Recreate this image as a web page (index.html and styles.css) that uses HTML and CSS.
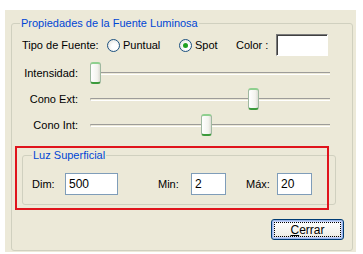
FILE: index.html
```html
<!DOCTYPE html>
<html lang="es">
<head>
  <meta charset="UTF-8">
  <title>Fuente Luminosa</title>
  <link rel="stylesheet" href="styles.css">
</head>
<body>
  <div class="dialog">
    <fieldset class="group main">
      <legend>Propiedades de la Fuente Luminosa</legend>

      <div class="type-row">
        <span class="type-label">Tipo de Fuente:</span>
        <label class="radio"><span class="dot"></span>Puntual</label>
        <label class="radio checked"><span class="dot"></span>Spot</label>
        <span class="color-label">Color :</span>
        <span class="color-box"></span>
      </div>

      <div class="slider-row">
        <span class="slider-label">Intensidad:</span>
        <div class="slider">
          <div class="track"></div>
          <div class="thumb-area"><span class="thumb" style="left: 0%"></span></div>
        </div>
      </div>

      <div class="slider-row">
        <span class="slider-label">Cono Ext:</span>
        <div class="slider">
          <div class="track"></div>
          <div class="thumb-area"><span class="thumb" style="left: 69%"></span></div>
        </div>
      </div>

      <div class="slider-row">
        <span class="slider-label">Cono Int:</span>
        <div class="slider">
          <div class="track"></div>
          <div class="thumb-area"><span class="thumb" style="left: 48.5%"></span></div>
        </div>
      </div>

      <!-- Luz superficial, marcada en rojo -->
      <div class="surface">
        <fieldset class="group inner">
          <legend>Luz Superficial</legend>
          <div class="fields">
            <span class="field-label">Dim:</span>
            <input class="text dim" type="text" value="500">
            <span class="field-label min">Min:</span>
            <input class="text small" type="text" value="2">
            <span class="field-label max">Máx:</span>
            <input class="text small" type="text" value="20">
          </div>
        </fieldset>
        <div class="highlight"></div>
      </div>

      <div class="actions">
        <button class="btn"><u>C</u>errar</button>
      </div>
    </fieldset>
  </div>
</body>
</html>
```

FILE: styles.css
```css
* {
  box-sizing: border-box;
}

body {
  margin: 0;
  background: #fff;
  font-family: 'Liberation Sans', Arial, sans-serif;
  font-size: 11px;
  color: #000;
}

.dialog {
  margin: 10px 0 0 5px;
  width: 351px;
  height: 242px;
  background: #ece9d8;
  padding: 6px 3px 0 6px;
}

.group {
  margin: 0;
  border: 1px solid #d0d0bf;
  border-radius: 3px;
}

.group legend {
  color: #0046d5;
  padding: 0 1px;
  line-height: 14px;
}

.main {
  height: 235px;
  padding: 4px 8px 0 10px;
}

.main legend {
  margin-left: -2px;
}

.type-row {
  display: flex;
  align-items: center;
  height: 22px;
}

.type-label {
  width: 85px;
}

.radio {
  display: flex;
  align-items: center;
  gap: 3px;
  width: 72px;
}

.dot {
  width: 13px;
  height: 13px;
  border: 1px solid #1c5180;
  border-radius: 50%;
  background: radial-gradient(circle at 60% 60%, #fff 30%, #dcdcd5 100%);
  display: flex;
  align-items: center;
  justify-content: center;
}

.checked .dot::after {
  content: "";
  width: 5px;
  height: 5px;
  border-radius: 50%;
  background: #21a121;
}

.color-label {
  margin-left: -15px;
  width: 40px;
}

.color-box {
  width: 52px;
  height: 22px;
  background: #fff;
  border: 1px solid;
  border-color: #7a7a7a #fff #fff #7a7a7a;
  box-shadow: inset 1px 1px #404040;
}

.slider-row {
  display: flex;
  align-items: center;
  height: 26px;
}

.type-row + .slider-row {
  margin-top: 4px;
}

.slider-label {
  width: 56px;
  text-align: right;
}

.slider {
  position: relative;
  margin-left: 12px;
  width: 240px;
  height: 22px;
}

.track {
  position: absolute;
  left: 0;
  right: 0;
  top: 10px;
  height: 3px;
  border-top: 1px solid #9d9c99;
  border-bottom: 1px solid #fff;
  border-left: 1px solid #c5c3b9;
}

.thumb-area {
  position: absolute;
  left: 0;
  top: 0;
  width: 229px;
  height: 22px;
}

.thumb {
  position: absolute;
  top: 0;
  width: 11px;
  height: 22px;
  border: 1px solid #9fb8a0;
  border-top: 2px solid #8fd08f;
  border-bottom: 2px solid #3c9a3c;
  border-radius: 3px;
  background: linear-gradient(to right, #fff, #f3f3ee 70%, #dcdcd4);
}

.surface {
  position: relative;
  margin-top: 10px;
}

.inner {
  margin-right: 8px;
  padding: 11px 8px 9px 9px;
}

.inner legend {
  margin-left: 0;
}

.fields {
  display: flex;
  align-items: center;
  height: 22px;
}

.field-label {
  width: 33px;
}

.field-label.min {
  margin-left: 40px;
}

.field-label.max {
  margin-left: 20px;
  width: 31px;
}

.text {
  height: 22px;
  border: 1px solid #7f9db9;
  background: #fff;
  font: inherit;
  font-size: 12px;
  padding: 0 3px;
}

.dim {
  width: 53px;
}

.small {
  width: 35px;
}

.highlight {
  position: absolute;
  left: -7px;
  top: -2px;
  width: 314px;
  height: 64px;
  border: 2px solid #e0141c;
}

.actions {
  display: flex;
  justify-content: flex-end;
  margin-top: 14px;
}

.btn {
  width: 73px;
  height: 21px;
  font: inherit;
  font-size: 12px;
  border: 1px solid #003c74;
  border-radius: 3px;
  background: linear-gradient(#fff, #f0f0ea 80%, #d6d0c5);
  box-shadow: inset 0 0 0 1px #9db7e8, inset 0 0 0 2px #c3d3fd;
  outline: 1px dotted #000;
  outline-offset: -4px;
  padding: 0;
}

.btn u {
  text-decoration: underline;
}
```
